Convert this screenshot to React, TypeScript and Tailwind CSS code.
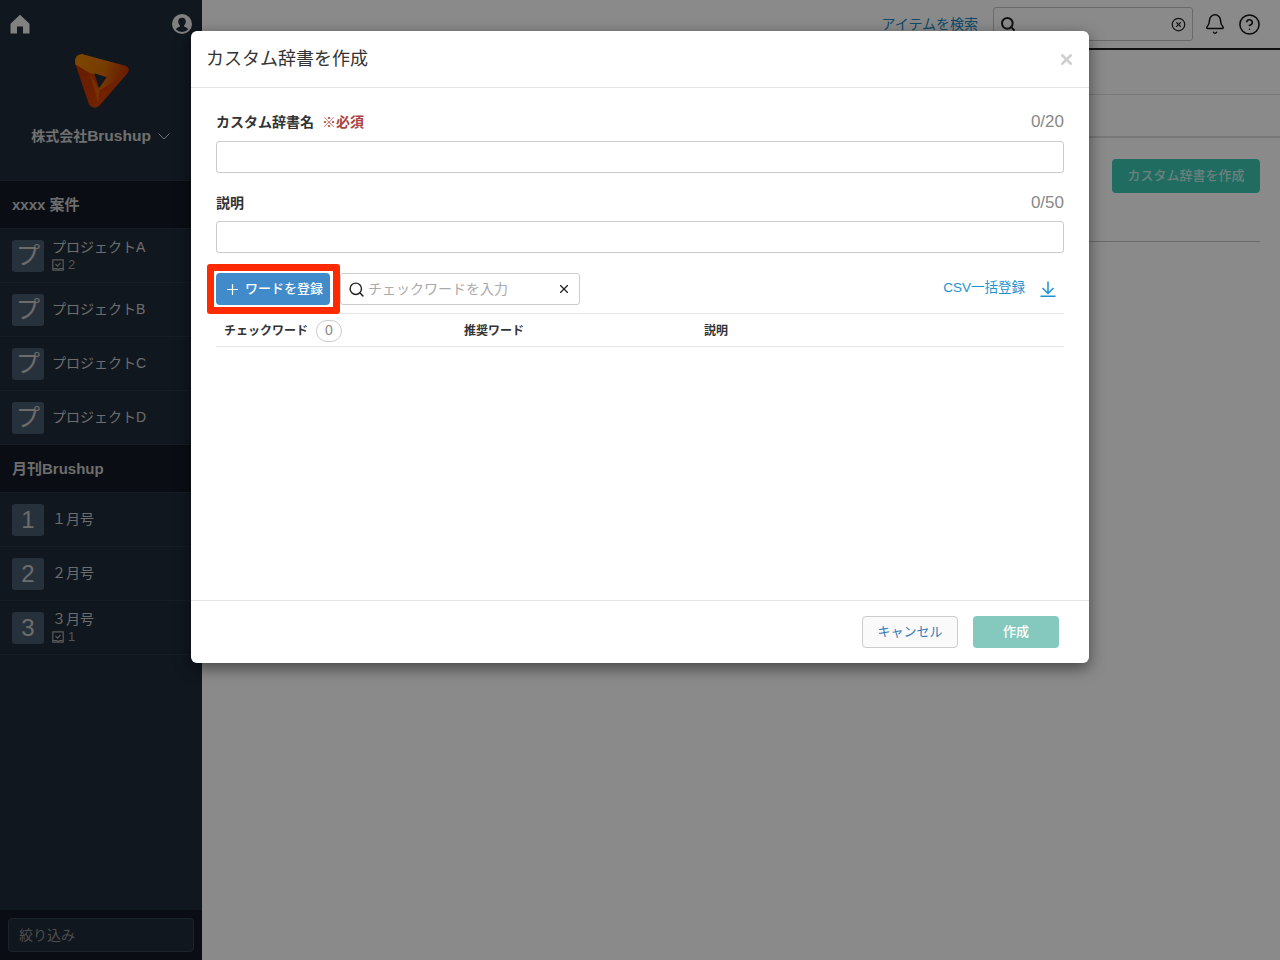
import { Search, XCircle, Bell, CircleHelp, Plus, X } from 'lucide-react';

const projects = ['プロジェクトA', 'プロジェクトB', 'プロジェクトC', 'プロジェクトD'];

function SquareCheck() {
  return (
    <svg className="w-3 h-3" viewBox="0 0 12 12" fill="none" stroke="#a5a5a5" strokeWidth="1.2">
      <path d="M.8.8h10.400v10.400H.8z" />
      <path d="M3.500 5.200l2 2 3-3.200" />
      <path d="M1 9.500h3.500l1.500 1 1.500-1H11" />
    </svg>
  );
}

function SideRow({ badge, title, count }: { badge: string; title: string; count?: number }) {
  return (
    <div className="h-[54px] flex items-center pl-3 border-b border-[#2a3646]">
      <div className="w-8 h-8 rounded-[3px] bg-[#485c6e] flex items-center justify-center text-[24px] text-[#c8c8c8]">
        {badge}
      </div>
      <div className={count !== undefined ? 'ml-2 pb-[2px]' : 'ml-2 pb-px'}>
        <div className={count !== undefined ? 'text-[14px] leading-[18px] text-[#c9c9c9] mb-[3px]' : 'text-[14px] leading-[18px] text-[#c9c9c9]'}>
          {title}
        </div>
        {count !== undefined && (
          <div className="flex items-center gap-1 text-[13px] leading-[12px] text-[#9a9a9a]">
            <SquareCheck />
            {count}
          </div>
        )}
      </div>
    </div>
  );
}

function SideHeading({ children }: { children: string }) {
  return (
    <div className="h-12 flex items-center pl-3 pt-[2px] bg-[#141b25] border-b border-[#2a3646] text-[15px] font-bold text-[#c9c9c9]">
      {children}
    </div>
  );
}

export default function App() {
  return (
    <div className="relative w-[1280px] h-[960px] overflow-hidden flex bg-white font-['Liberation_Sans','Noto_Sans_CJK_JP',sans-serif]">
      {/* Sidebar */}
      <aside className="w-[202px] h-full flex flex-col bg-[#1f2b39] shrink-0">
        <div className="h-[181px] border-b border-[#2a3646] flex flex-col">
          <div className="flex justify-between px-[10px] pt-[14px]">
            <svg className="w-5 h-5" viewBox="0 0 20 20" fill="#eeeeee">
              <path d="M10 .8 L19.500 9.800 V19.500 H13 V12.500 H7 V19.500 H.5 V9.800z" />
            </svg>
            <svg className="w-5 h-5" viewBox="0 0 24 24">
              <circle cx="12" cy="12" r="12" fill="#eeeeee" />
              <path d="M12 4.500c-3.200 0-4.800 2.400-4.500 5 .2 1.700.9 3.100 2 4v1.500c-2.200.8-4 1.800-5 3.300a10.500 10.500 0 0 0 15 0c-1-1.500-2.800-2.500-5-3.300v-1.500c1.100-.9 1.800-2.300 2-4 .3-2.600-1.300-5-4.500-5z" fill="#1f2b39" />
            </svg>
          </div>
          <svg className="w-[75px] h-[70px] ml-[65px] mt-[11px]" viewBox="0 0 225 210">
            <defs>
              <linearGradient id="logoTop" x1="0" y1="0" x2="1" y2="0.2">
                <stop offset="0" stopColor="#e88600" />
                <stop offset="0.6" stopColor="#d87000" />
                <stop offset="1" stopColor="#c43400" />
              </linearGradient>
              <linearGradient id="logoLeft" x1="0" y1="0" x2="0.5" y2="1">
                <stop offset="0" stopColor="#b83000" />
                <stop offset="1" stopColor="#d44000" />
              </linearGradient>
            </defs>
            <path d="M50 27 L182 63 Q196 70 188 84 L103 182 Q85 196 72 178 L31 58 Q24 32 50 27z" fill="url(#logoLeft)" />
            <path d="M50 27 L182 63 Q196 70 188 84 L104 136 L100 130 L125 97 L75 85 L31 58 Q24 32 50 27z" fill="url(#logoTop)" />
            <path d="M75 85 L100 130 L104 136 L100 176 Q92 150 75 85z" fill="#d85a08" />
            <path d="M88 85 L125 97 L102 130z" fill="#1f2b39" />
          </svg>
          <div className="mt-[9px] flex items-center justify-center gap-[7px] font-bold text-[#d0d0d0] pr-px">
            <span>
              <span className="text-[14px]">株式会社</span>
              <span className="text-[15.5px]">Brushup</span>
            </span>
            <svg className="w-3 h-[7px]" viewBox="0 0 12 7" fill="none" stroke="#d0d0d0" strokeWidth="1">
              <path d="M.5.5L6 6l5.500-5.500" />
            </svg>
          </div>
        </div>
        <SideHeading>xxxx 案件</SideHeading>
        {projects.map((p, i) => (
          <SideRow key={p} badge="プ" title={p} count={i === 0 ? 2 : undefined} />
        ))}
        <SideHeading>月刊Brushup</SideHeading>
        <SideRow badge="1" title="１月号" />
        <SideRow badge="2" title="２月号" />
        <SideRow badge="3" title="３月号" count={1} />
        <div className="flex-1" />
        <div className="h-[50px] bg-[#141b25] px-2 pt-2">
          <div className="h-[34px] rounded border border-[#35424f] bg-[#1f2b39] flex items-center pl-2.5 text-[14px] text-[#8e8e8e]">
            絞り込み
          </div>
        </div>
      </aside>

      {/* Page behind the dialog */}
      <main className="flex-1 flex flex-col">
        <div className="h-[50px] border-b-2 border-[#222] flex items-center justify-end pr-[19px]">
          <span className="text-[14px] text-[#1a8ac0]">アイテムを検索</span>
          <div className="ml-[15px] w-[200px] h-[34px] border border-[#c4c4c4] rounded-[3px] flex items-center justify-between px-1.5">
            <Search size={16} strokeWidth={3} className="text-[#222]" />
            <XCircle size={15} strokeWidth={2} className="text-[#222]" />
          </div>
          <Bell size={22} strokeWidth={1.6} className="ml-[11px] text-[#111]" />
          <CircleHelp size={23} strokeWidth={1.6} className="ml-[12px] text-[#111]" />
        </div>
        <div className="h-[45px] border-b border-[#dedede]" />
        <div className="h-[43px] border-b-2 border-[#dedede]" />
        <div className="flex justify-end pt-[21px] pr-5">
          <div className="w-[148px] h-[34px] pb-px rounded-[4px] bg-[#3dc8b4] text-white/70 text-[13px] font-medium flex items-center justify-center">
            カスタム辞書を作成
          </div>
        </div>
        <div className="mt-[48px] mr-5 border-b border-[#c0c0c0]" />
      </main>

      {/* Backdrop */}
      <div className="absolute inset-0 bg-black/[.46]" />

      {/* Dialog */}
      <div className="absolute left-[191px] top-[31px] w-[898px] h-[632px] bg-white rounded-[6px] shadow-[0_5px_15px_rgba(0,0,0,0.5)] flex flex-col">
        <div className="h-[57px] border-b border-[#e5e5e5] flex items-center justify-between pl-[15px] pr-[14px] shrink-0">
          <h2 className="text-[18px] text-[#333]">カスタム辞書を作成</h2>
          <X size={17} strokeWidth={3.5} className="text-[#cfcfcf]" />
        </div>
        <div className="flex-1 px-[25px] pt-[24px]">
          <div className="flex justify-between items-center h-[20px]">
            <div className="text-[14px] font-bold text-[#333]">
              カスタム辞書名<span className="ml-2 text-[#a94442]">※必須</span>
            </div>
            <span className="text-[17px] text-[#888]">0/20</span>
          </div>
          <div className="mt-[9px] h-[32px] border border-[#ccc] rounded-[3px]" />
          <div className="mt-[20px] flex justify-between items-center h-[20px]">
            <div className="text-[14px] font-bold text-[#333]">説明</div>
            <span className="text-[17px] text-[#888]">0/50</span>
          </div>
          <div className="mt-[8px] h-[32px] border border-[#ccc] rounded-[3px]" />

          <div className="mt-[20px] h-[41px] flex items-start border-b border-[#e5e5e5]">
            <div className="w-[114px] h-[32px] pl-[8px] rounded-[4px] bg-[#428bca] text-white text-[13px] font-medium flex items-center gap-[4px]">
              <Plus size={17} strokeWidth={1.75} />
              ワードを登録
            </div>
            <div className="ml-[10px] w-[240px] h-[32px] border border-[#ccc] rounded-[3px] flex items-center pl-[7px] pr-2 text-[14px] text-[#aaa]">
              <Search size={17} strokeWidth={2} className="text-[#222] mr-[3px]" />
              チェックワードを入力
              <X size={14} strokeWidth={2} className="ml-auto text-[#222]" />
            </div>
            <div className="ml-auto h-[30px] flex items-center pr-2 text-[13.5px] text-[#1b93d1]">
              CSV一括登録
              <svg className="w-4 h-4 ml-[15px] mt-[2px]" viewBox="0 0 16 16" fill="none" stroke="#1b93d1" strokeWidth="1.5">
                <path d="M8 .5v11.500M2.500 7l5.500 5.500L13.500 7M.5 15.250h15" />
              </svg>
            </div>
          </div>
          <div className="h-[33px] pt-px grid grid-cols-[240px_240px_1fr] items-center pl-2 border-b border-[#e5e5e5] text-[12px] font-bold text-[#333]">
            <div className="flex items-center gap-[8px]">
              チェックワード
              <span className="w-[26px] h-[22px] rounded-full border border-[#ccc] flex items-center justify-center text-[14px] font-normal text-[#888]">
                0
              </span>
            </div>
            <div>推奨ワード</div>
            <div>説明</div>
          </div>
        </div>
        <div className="h-[63px] border-t border-[#e5e5e5] flex justify-end gap-[15px] pt-[15px] pr-[30px] shrink-0">
          <div className="w-[96px] h-[32px] pb-px rounded-[4px] border border-[#ccc] bg-[#fafafa] text-[13px] text-[#337ab7] flex items-center justify-center">
            キャンセル
          </div>
          <div className="w-[86px] h-[32px] pb-px rounded-[4px] bg-[#85c9be] text-white text-[13px] font-medium flex items-center justify-center">
            作成
          </div>
        </div>
      </div>

      {/* Red annotation around the button */}
      <div className="absolute left-[207px] top-[264px] w-[133px] h-[50px] rounded-[3px] border-[7px] border-[#ff2a00]" />
    </div>
  );
}
